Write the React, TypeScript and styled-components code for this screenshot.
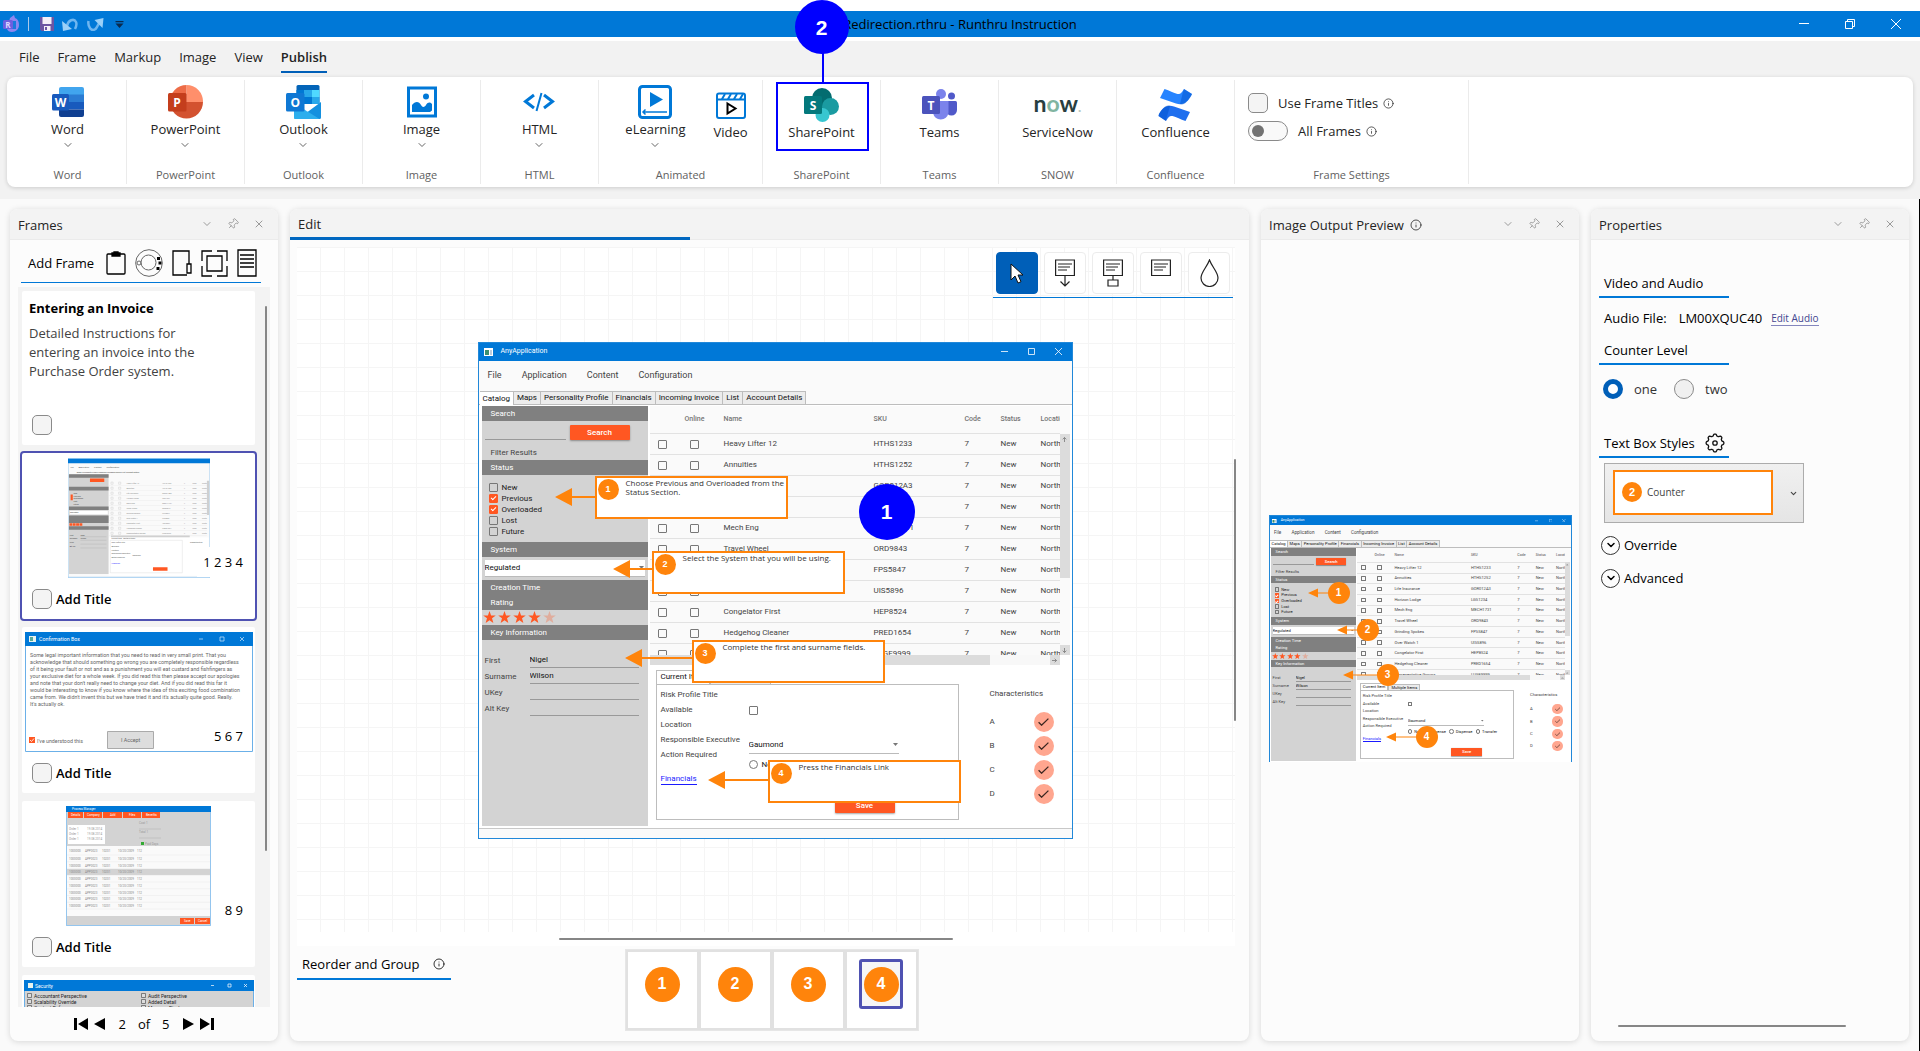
import React, { useId } from "react";
import styled, { createGlobalStyle, css } from "styled-components";
import { ChevronDown, Info, Pin, X } from "lucide-react";

const UI = `"Open Sans", "Noto Sans", sans-serif`;
const APP = `Roboto, "Liberation Sans", sans-serif`;
const BLUE = "#0078d7";
const INDIGO = "#4f52b2";
const ORANGE = "#ff840b";
const RED = "#ff5722";
const MARK = "#0000ff";

const GlobalStyle = createGlobalStyle`
  *, *::before, *::after { box-sizing: border-box; }
  body { margin: 0; background: #fff; font-family: ${UI}; font-size: 13px; line-height: 20px; color: #242424; }
  button, input, select { font: inherit; color: inherit; margin: 0; }
  button { padding: 0; border: 0; background: none; }
  svg { display: block; flex: none; }
`;

/* ---------- shell ---------- */

const Page = styled.div`
  height: 100vh;
  min-height: 720px;
  padding-top: 11px;
  display: flex;
  flex-direction: column;
  overflow: hidden;
`;

const TitleBar = styled.header`
  height: 26px;
  flex: none;
  display: grid;
  grid-template-columns: 1fr auto 1fr;
  align-items: center;
  background: ${BLUE};
`;

const QuickAccess = styled.div`
  display: flex;
  align-items: center;
  gap: 8px;
  padding-left: 3px;
`;

const QuickDivider = styled.span`
  width: 1px;
  height: 14px;
  margin-right: 3px;
  background: #a9c9ea;
`;

const DocTitle = styled.h1`
  margin: 0;
  font-size: 13px;
  font-weight: 400;
  line-height: 20px;
  color: #000;
`;

const WindowButtons = styled.div`
  justify-self: end;
  display: flex;
  padding-right: 1px;
`;

const WindowButton = styled.button`
  width: 46px;
  height: 26px;
  display: grid;
  place-items: center;
  color: #fff;
`;

const Body = styled.div`
  flex: 1;
  min-height: 0;
  margin-top: 4px;
  display: flex;
  flex-direction: column;
  background: #f2f2f2;
`;

const MenuTabs = styled.nav`
  display: flex;
  gap: 18px;
  padding: 6px 19px 0;
  height: 36px;
  flex: none;
`;

const MenuTab = styled.button<{ $active?: boolean }>`
  height: 26px;
  align-self: flex-start;
  padding-bottom: 4px;
  line-height: 20px;
  border-bottom: 2px solid ${(p) => (p.$active ? "#005fb8" : "transparent")};
  font-weight: ${(p) => (p.$active ? 600 : 400)};
`;

const Ribbon = styled.section`
  display: flex;
  height: 110px;
  flex: none;
  margin: 0 7px 12px;
  padding: 3px 2px;
  background: #fff;
  border-radius: 8px;
  box-shadow: 0 1px 4px rgba(0, 0, 0, 0.16);
`;

const Group = styled.div<{ $wide?: boolean; $settings?: boolean }>`
  width: ${(p) => (p.$settings ? 234 : p.$wide ? 164 : 118)}px;
  padding-top: 5px;
  display: flex;
  flex-direction: column;
  justify-content: space-between;
  border-right: 1px solid #ebebeb;
`;

const GroupItems = styled.div<{ $wide?: boolean }>`
  display: flex;
  justify-content: center;
  gap: 28px;
  padding-left: ${(p) => (p.$wide ? 12 : 0)}px;
`;

const GroupLabel = styled.div`
  font-size: 11px;
  line-height: 18px;
  text-align: center;
  color: #616161;
`;

const RibbonItem = styled.button<{ $plain?: boolean }>`
  position: relative;
  display: flex;
  flex-direction: column;
  align-items: center;
  padding-top: ${(p) => (p.$plain ? 3 : 0)}px;
`;

const RibbonIcon = styled.span`
  height: 34px;
  display: grid;
  place-items: center;
`;

const MarkBox = styled.span`
  position: absolute;
  left: 50%;
  top: -3px;
  width: 93px;
  height: 69px;
  margin-left: -46px;
  border: 2px solid ${MARK};
`;

const MarkStem = styled.span`
  position: absolute;
  left: 50%;
  top: -32px;
  width: 2px;
  height: 30px;
  background: ${MARK};
`;

const MarkDot = styled.span<{ $size: number; $x: string; $y: number }>`
  position: absolute;
  z-index: 5;
  left: ${(p) => p.$x};
  top: ${(p) => p.$y}px;
  width: ${(p) => p.$size}px;
  height: ${(p) => p.$size}px;
  border-radius: 50%;
  background: ${MARK};
  color: #fff;
  font: 700 21px/1 "Liberation Sans", Arial, sans-serif;
  display: grid;
  place-items: center;
`;

const Settings = styled.div`
  display: flex;
  flex-direction: column;
  gap: 8px;
  padding: 8px 13px 0;
`;

const SettingRow = styled.label`
  display: flex;
  align-items: center;
  gap: 10px;
  svg { margin-left: -5px; }
`;

const CheckBox = styled.input.attrs({ type: "checkbox" })`
  appearance: none;
  width: 20px;
  height: 20px;
  flex: none;
  border: 1px solid #8a8a8a;
  border-radius: 5px;
  background: #f4f4f4;
`;

const Toggle = styled.input.attrs({ type: "checkbox", role: "switch" })`
  appearance: none;
  width: 40px;
  height: 20px;
  flex: none;
  padding: 3px;
  border: 1px solid #8a8a8a;
  border-radius: 10px;
  background: #f9f9f9;
  &::before {
    content: "";
    display: block;
    width: 12px;
    height: 12px;
    border-radius: 50%;
    background: #727272;
  }
`;

const Workspace = styled.main`
  flex: 1;
  min-height: 0;
  display: grid;
  grid-template-columns: 268px minmax(0, 1fr) 318px 318px;
  grid-template-rows: minmax(0, 1fr);
  gap: 12px;
  padding: 10px;
  background: #fafafa;
  border-right: 1px solid #000;
`;

/* ---------- panels ---------- */

const PanelFrame = styled.section`
  display: flex;
  flex-direction: column;
  min-height: 0;
  background: #fcfcfc;
  border-radius: 8px;
  box-shadow: 0 1px 6px rgba(0, 0, 0, 0.14);
`;

const PanelHead = styled.header`
  display: flex;
  align-items: center;
  justify-content: space-between;
  height: 31px;
  flex: none;
  padding: 0 13px 0 8px;
  border-bottom: 1px solid #ebebeb;
  border-radius: 8px 8px 0 0;
  background: #f3f3f3;
`;

const PanelTitle = styled.h2`
  display: flex;
  align-items: center;
  gap: 6px;
  margin: 0;
  padding-top: 2px;
  font-size: 13px;
  font-weight: 400;
  line-height: 20px;
`;

const PanelTools = styled.div`
  display: flex;
  gap: 14px;
  color: #8f8f8f;
`;

function Panel({ title, info, children }: { title: string; info?: boolean; children: React.ReactNode }) {
  return (
    <PanelFrame>
      <PanelHead>
        <PanelTitle>
          {title}
          {info && <Info size={12} strokeWidth={1.6} />}
        </PanelTitle>
        <PanelTools>
          <button aria-label="Panel options"><ChevronDown size={12} strokeWidth={1.8} /></button>
          <button aria-label="Pin panel"><PinTilted size={12} strokeWidth={1.6} /></button>
          <button aria-label="Close panel"><X size={12} strokeWidth={1.8} /></button>
        </PanelTools>
      </PanelHead>
      {children}
    </PanelFrame>
  );
}

const PinTilted = styled(Pin)`
  transform: rotate(45deg);
`;

/* ---------- frames panel ---------- */

const AddFrame = styled.div`
  display: flex;
  align-items: center;
  gap: 9px;
  height: 43px;
  flex: none;
  margin: 0 17px 4px 11px;
  padding: 4px 3px 0 7px;
  border-bottom: 1px solid ${BLUE};
  color: #000;
`;

const AddFrameText = styled.span`
  margin-right: 3px;
`;

const FrameList = styled.div`
  flex: 1;
  min-height: 0;
  display: flex;
  margin: 0 8px;
  padding: 4px 3px 0 4px;
  gap: 10px;
  overflow: hidden;
  background: #f3f3f3;
`;

const FrameCards = styled.div`
  display: flex;
  flex-direction: column;
  flex: 1;
  min-width: 0;
  gap: 8px;
`;

const VerticalThumb = styled.span<{ $top: number; $height: number }>`
  flex: none;
  width: 2px;
  height: ${(p) => p.$height}px;
  margin-top: ${(p) => p.$top}px;
  border-radius: 1px;
  background: #868686;
`;

const Card = styled.article<{ $selected?: boolean; $text?: boolean }>`
  position: relative;
  display: flex;
  flex-direction: column;
  flex: none;
  justify-content: space-between;
  height: ${(p) => (p.$text ? 154 : 166)}px;
  padding: ${(p) => (p.$text ? "7px 7px 10px" : "5px 0 10px")};
  border-radius: 2px;
  background: #fff;
  ${(p) => p.$selected && css`box-shadow: 0 0 0 2px ${INDIGO};`}
`;

const CardPicture = styled.div`
  display: flex;
  justify-content: center;
`;

const CardCounters = styled.span`
  position: absolute;
  right: 6px;
  top: 94px;
  padding: 5px 6px;
  background: #fff;
  line-height: 20px;
  color: #000;
`;

const CardTitle = styled.h3`
  margin: 0 0 6px;
  font-size: 13px;
  line-height: 20px;
  font-weight: 700;
  color: #000;
`;

const CardText = styled.p`
  margin: 0;
  padding-right: 30px;
  line-height: 19px;
  color: #424242;
`;

const CardCheck = styled.label<{ $inset?: boolean }>`
  display: flex;
  align-items: center;
  gap: 4px;
  padding-left: ${(p) => (p.$inset ? 10 : 3)}px;
  font-weight: 600;
  color: #000;
`;

const Pager = styled.div`
  display: flex;
  align-items: center;
  justify-content: center;
  gap: 6px;
  height: 34px;
  flex: none;
  color: #000;
`;

const PagerText = styled.span`
  display: flex;
  gap: 12px;
  padding: 0 7px;
`;

/* ---------- edit panel ---------- */

const EditTab = styled.button`
  width: 400px;
  height: 31px;
  margin-left: -8px;
  padding: 2px 0 0 8px;
  text-align: left;
  border-bottom: 3px solid #0067c0;
  border-radius: 8px 0 0 0;
`;

const CanvasRow = styled.div`
  flex: 1;
  min-height: 0;
  display: flex;
  position: relative;
`;

const CanvasArea = styled.div`
  position: relative;
  flex: 1;
  min-width: 0;
  min-height: 0;
  display: grid;
  place-items: center;
  margin: 7px 14px 0 7px;
  padding: 0 0 13px 18px;
  overflow: hidden;
  background: #fff;
  &::before {
    content: "";
    position: absolute;
    inset: 0 0 14px;
    background-image: linear-gradient(#f5f5f5 1px, transparent 1px), linear-gradient(90deg, #f5f5f5 1px, transparent 1px);
    background-size: 24px 24px;
    background-position: 0 0, -1px 0;
  }
`;

const ScrollMark = styled.span<{ $vertical?: boolean }>`
  position: absolute;
  border-radius: 1px;
  background: #868686;
  ${(p) =>
    p.$vertical
      ? css`right: 13px; top: 31%; width: 2px; height: 262px;`
      : css`left: 28%; bottom: 6px; width: 394px; height: 2px;`}
`;

const ToolStrip = styled.div`
  position: absolute;
  z-index: 2;
  top: 5px;
  right: 2px;
  display: flex;
  gap: 6px;
  padding: 0 3px 3px;
  border-bottom: 1px solid ${BLUE};
`;

const ToolButton = styled.button<{ $active?: boolean }>`
  width: 42px;
  height: 42px;
  display: grid;
  place-items: center;
  border: 1px solid ${(p) => (p.$active ? "#005fb8" : "#ececec")};
  border-radius: 4px;
  background: ${(p) => (p.$active ? "#005fb8" : "#fff")};
`;

const Stage = styled.div`
  position: relative;
`;

const Reorder = styled.div`
  display: grid;
  grid-template-columns: 1fr auto 1fr;
  align-items: start;
  flex: none;
  padding: 3px 7px 10px;
`;

const ReorderTitle = styled.h3`
  justify-self: start;
  display: flex;
  align-items: center;
  gap: 14px;
  margin: 0;
  padding: 5px 6px 4px 5px;
  border-bottom: 2px solid ${BLUE};
  font-size: 13px;
  font-weight: 400;
  line-height: 20px;
  color: #000;
`;

const ReorderStrip = styled.div`
  display: flex;
  margin-left: 4px;
  border: 1px solid #e6e6e6;
`;

const ReorderCell = styled.div`
  width: 73px;
  height: 80px;
  display: flex;
  justify-content: center;
  align-items: flex-start;
  padding-top: 7px;
  border: 2px solid #e1e1e1;
  background: #fff;
`;

const ReorderFrame = styled.button<{ $selected?: boolean }>`
  width: 44px;
  height: 50px;
  display: grid;
  place-items: center;
  border: 3px solid ${(p) => (p.$selected ? INDIGO : "transparent")};
  border-radius: 3px;
  background: ${(p) => (p.$selected ? "#f6f6f6" : "transparent")};
`;

const Dot = styled.span<{ $size: number; $font: number }>`
  width: ${(p) => p.$size}px;
  height: ${(p) => p.$size}px;
  flex: none;
  display: grid;
  place-items: center;
  border-radius: 50%;
  background: ${ORANGE};
  color: #fff;
  font: 700 ${(p) => p.$font}px/1 "Liberation Sans", Arial, sans-serif;
`;

/* ---------- call-outs on the stage ---------- */

const CalloutBox = styled.div<{ $x: number; $y: number }>`
  position: absolute;
  left: ${(p) => p.$x}px;
  top: ${(p) => p.$y}px;
  width: 193px;
  height: 43px;
  display: flex;
  gap: 7px;
  padding-left: 1px;
  border: 2px solid ${ORANGE};
  background: #fff;
  font: 400 8px/9px "Open Sans", sans-serif;
  color: #333;
  white-space: pre;
`;

const CalloutDot = styled(Dot)`
  margin-top: 1px;
`;

const Arrow = styled.svg`
  position: absolute;
  left: 0;
  top: 0;
  width: 100%;
  height: 100%;
  overflow: visible;
  pointer-events: none;
`;

const PreviewDot = styled(Dot)<{ $x: number; $y: number }>`
  position: absolute;
  left: ${(p) => p.$x}px;
  top: ${(p) => p.$y}px;
`;

const callouts = [
  { x: 117, y: 134, tip: 77, ty: 155, text: "Choose Previous and Overloaded from the\nStatus Section." },
  { x: 174, y: 209, tip: 135, ty: 227, text: "Select the System that you will be using." },
  { x: 214, y: 298, tip: 147, ty: 316, text: "Complete the first and surname fields." },
  { x: 290, y: 418, tip: 230, ty: 438, text: "Press the Financials Link" },
];

const previewMarks = [
  { cx: 70, cy: 78, tip: 39 },
  { cx: 99, cy: 115, tip: 68 },
  { cx: 119, cy: 160, tip: 74 },
  { cx: 158, cy: 222, tip: 117 },
];

/* ---------- the captured application ---------- */

const Win = styled.div<{ $zoom?: number }>`
  zoom: ${(p) => p.$zoom ?? 1};
  width: 595px;
  height: 497px;
  display: flex;
  flex-direction: column;
  border: 1px solid #2188d9;
  background: #fafafa;
  font: 400 8px/15px ${APP};
  color: #444;
`;

const WinTitle = styled.div`
  height: 18px;
  flex: none;
  display: flex;
  align-items: center;
  justify-content: space-between;
  padding: 0 10px 0 5px;
  background: ${BLUE};
  color: #fff;
  font-size: 7px;
`;

const WinName = styled.span`
  display: flex;
  align-items: center;
  gap: 8px;
`;

const WinControls = styled.span`
  display: flex;
  gap: 20px;
`;

const WinMenu = styled.div`
  display: flex;
  gap: 20px;
  height: 30px;
  flex: none;
  padding: 7px 9px;
  font-size: 9px;
`;

const WinTabs = styled.div`
  display: flex;
  align-items: flex-end;
  height: 14px;
  flex: none;
  padding-left: 1px;
  border-bottom: 1px solid #bdbdbd;
`;

const WinTab = styled.button<{ $active?: boolean }>`
  height: ${(p) => (p.$active ? 14 : 13)}px;
  margin-bottom: ${(p) => (p.$active ? -1 : 0)}px;
  padding: 0 3px;
  line-height: 11px;
  border: solid #bdbdbd;
  border-width: 1px 1px 0 0;
  background: ${(p) => (p.$active ? "#fff" : "#ececec")};
  color: #111;
`;

const WinBody = styled.div`
  flex: 1;
  min-height: 0;
  display: flex;
  gap: 2px;
  padding: 1px 2px 2px 3px;
  border-bottom: 1px solid #c8c8c8;
  margin-bottom: 9px;
  background: #fff;
`;

const Side = styled.div`
  width: 166px;
  flex: none;
  background: #d3d3d3;
`;

const SideHead = styled.div`
  height: 15px;
  padding-left: 9px;
  background: #808080;
  color: #fff;
`;

const SearchRow = styled.div`
  display: flex;
  gap: 4px;
  padding: 4px 3px 0;
`;

const LineInput = styled.input<{ $w: number }>`
  width: ${(p) => p.$w}px;
  height: 15px;
  padding: 0;
  border: 0;
  border-bottom: 1px solid #999;
  border-radius: 0;
  background: none;
  color: #111;
`;

const RedButton = styled.button`
  width: 60px;
  height: 15px;
  border-radius: 1px;
  background: ${RED};
  color: #fff;
  font-weight: 500;
  line-height: 15px;
  box-shadow: 0 1px 2px rgba(0, 0, 0, 0.35);
`;

const FilterText = styled.div`
  height: 20px;
  padding: 5px 9px 0;
`;

const StatusList = styled.div`
  height: 67px;
  padding: 7px 7px 0;
  display: flex;
  flex-direction: column;
`;

const TickLabel = styled.label`
  display: flex;
  align-items: center;
  gap: 4px;
  height: 11px;
  line-height: 11px;
  color: #222;
`;

const Tick = styled.input`
  appearance: none;
  width: 9px;
  height: 9px;
  flex: none;
  border: 1px solid #777;
  border-radius: ${(p) => (p.type === "radio" ? "50%" : "1px")};
  &:checked {
    border-color: ${RED};
    background: ${RED};
  }
  &:checked::after {
    content: "";
    display: block;
    width: 3px;
    height: 5px;
    margin: 0 auto;
    border: solid #fff;
    border-width: 0 1px 1px 0;
    transform: rotate(45deg);
  }
`;

const SideSelect = styled.div`
  height: 23px;
  padding: 3px;
`;

const SelectWrap = styled.div<{ $w: number; $white?: boolean }>`
  display: flex;
  align-items: center;
  width: ${(p) => p.$w}px;
  height: 17px;
  padding-right: 1px;
  border-bottom: 1px solid #bbb;
  background: ${(p) => (p.$white ? "#fff" : "none")};
`;

const PlainSelect = styled.select`
  appearance: none;
  flex: 1;
  min-width: 0;
  padding: 0;
  border: 0;
  background: none;
  color: #111;
`;

const Stars = styled.div`
  display: flex;
  gap: 2px;
  height: 15px;
  padding: 1px;
`;

const KeyFields = styled.div`
  display: grid;
  gap: 1px;
  padding: 13px 9px 0 3px;
`;

const KeyField = styled.label`
  display: flex;
  justify-content: space-between;
  height: 15px;
`;

const Main = styled.div`
  flex: 1;
  min-width: 0;
`;

const TableFrame = styled.div`
  height: 249px;
  display: flex;
  background: #fafafa;
`;

const TableClip = styled.div`
  flex: 1;
  min-width: 0;
  overflow: hidden;
`;

const Table = styled.table`
  width: 430px;
  table-layout: fixed;
  border-collapse: collapse;
  th, td {
    height: 21px;
    padding: 0;
    border-bottom: 1px solid #e2e2e2;
    text-align: left;
    font-weight: 400;
    line-height: 12px;
    white-space: nowrap;
  }
  th {
    height: 28px;
    font-size: 7px;
    font-weight: 500;
    color: #757575;
  }
  td:nth-child(-n + 2), th:nth-child(-n + 2) { text-align: center; }
  td input { display: block; margin: 0 auto; }
`;

const HeadCell = styled.th<{ $w: number; $pad?: number }>`
  width: ${(p) => p.$w}px;
  && { padding-left: ${(p) => p.$pad ?? 0}px; }
`;

const NameCell = styled.td`
  && { padding-left: 10px; }
`;

const Track = styled.div`
  width: 10px;
  margin: 28px 0 0;
  display: flex;
  flex-direction: column;
  justify-content: space-between;
`;

const TrackThumb = styled.span<{ $h: number }>`
  min-width: 10px;
  height: ${(p) => p.$h}px;
  padding-top: 3px;
  background: #dcdcdc;
  display: flex;
  justify-content: center;
`;

const HTrack = styled.div`
  display: flex;
  justify-content: space-between;
  height: 10px;
  margin-right: 10px;
  background: #f8f8f8;
`;

const HThumb = styled.span<{ $w: number }>`
  width: ${(p) => p.$w}px;
  background: #dcdcdc;
`;

const Lower = styled.div`
  display: flex;
  gap: 31px;
  padding: 5px 6px 0;
`;

const Detail = styled.div`
  width: 303px;
`;

const DetailTabs = styled.div`
  display: flex;
  align-items: flex-end;
`;

const DetailTab = styled.button<{ $active?: boolean }>`
  height: ${(p) => (p.$active ? 14 : 12)}px;
  padding: 0 4px;
  line-height: 12px;
  border: 1px solid #bdbdbd;
  border-bottom: 0;
  background: ${(p) => (p.$active ? "#fff" : "#ececec")};
  color: #111;
`;

const DetailBody = styled.div`
  display: flex;
  gap: 10px;
  height: 136px;
  padding: 2px 4px;
  border: 1px solid #bdbdbd;
`;

const DetailLabels = styled.div`
  width: 78px;
  flex: none;
  display: flex;
  flex-direction: column;
  white-space: nowrap;
`;

const DetailLink = styled.a`
  align-self: flex-start;
  margin-top: 11px;
  line-height: 11px;
  color: #1a1aff;
  text-decoration: none;
  border-bottom: 1px solid #1a1aff;
`;

const DetailValues = styled.div`
  flex: 1;
  display: flex;
  flex-direction: column;
  align-items: flex-start;
  padding-top: 19px;
`;

const ExecutiveSlot = styled.div`
  margin-top: 22px;
`;

const RadioRow = styled.div`
  display: flex;
  gap: 6px;
  margin: 5px 0 28px;
`;

const SaveSlot = styled.div`
  padding-left: 86px;
`;

const Traits = styled.div`
  display: flex;
  flex-direction: column;
  padding-top: 16px;
`;

const TraitHead = styled.div`
  margin-bottom: 9px;
`;

const Trait = styled.div`
  display: flex;
  align-items: center;
  justify-content: space-between;
  width: 64px;
  height: 24px;
`;

const TraitTick = styled.span`
  width: 20px;
  height: 20px;
  display: grid;
  place-items: center;
  border-radius: 50%;
  background: #ffa68f;
`;

const rows: [string, string][] = [
  ["Heavy Lifter 12", "HTHS1233"],
  ["Annuities", "HTHS1252"],
  ["Life Insurance", "GOR012A3"],
  ["Horizon Lodge", "LGS1234"],
  ["Mech Eng", "MECH1731"],
  ["Travel Wheel", "ORD9843"],
  ["Grinding Spokes", "FPS5847"],
  ["Over Watch 1", "UIS5896"],
  ["Congelator First", "HEP8524"],
  ["Hedgehog Cleaner", "PRED1654"],
  ["Representative Groups", "LUGF9999"],
];

const appTabs = ["Catalog", "Maps", "Personality Profile", "Financials", "Incoming Invoice", "List", "Account Details"];
const statuses: [string, boolean][] = [["New", false], ["Previous", true], ["Overloaded", true], ["Lost", false], ["Future", false]];

const Caret = () => (
  <svg width="5" height="3" viewBox="0 0 5 3"><path d="M0 0h5L2.500 3z" fill="#777" /></svg>
);

const MiniArrow = ({ turn }: { turn: number }) => (
  <svg width="5" height="5" viewBox="0 0 5 5" fill="none" stroke="#777" strokeWidth=".8">
    <g transform={`rotate(${turn} 2.500 2.500)`}><path d="M2.500 5V.5M.7 2.300L2.500.5l1.800 1.800" /></g>
  </svg>
);

function AnyApplication({ zoom }: { zoom?: number }) {
  const id = useId();
  return (
    <Win $zoom={zoom}>
      <WinTitle>
        <WinName>
          <svg width="9" height="8" viewBox="0 0 9 8"><path fill="#fff" d="M0 0h9v8H0z" /><path fill="#3b8f6f" d="M1 2h4v5H1z" /><path fill="#bcd" d="M6 2h2v5H6z" /></svg>
          AnyApplication
        </WinName>
        <WinControls>
          <svg width="7" height="7" viewBox="0 0 7 7" stroke="#fff" strokeWidth=".8"><path d="M0 3.500h7" /></svg>
          <svg width="7" height="7" viewBox="0 0 7 7" stroke="#fff" strokeWidth=".8" fill="none"><path d="M.5.5h6v6h-6z" /></svg>
          <svg width="7" height="7" viewBox="0 0 7 7" stroke="#fff" strokeWidth=".8"><path d="M0 0l7 7M7 0L0 7" /></svg>
        </WinControls>
      </WinTitle>
      <WinMenu>
        <span>File</span><span>Application</span><span>Content</span><span>Configuration</span>
      </WinMenu>
      <WinTabs>
        {appTabs.map((t, i) => <WinTab key={t} $active={i === 0}>{t}</WinTab>)}
      </WinTabs>
      <WinBody>
        <Side>
          <SideHead>Search</SideHead>
          <SearchRow>
            <LineInput $w={81} aria-label="Search catalog" />
            <RedButton>Search</RedButton>
          </SearchRow>
          <FilterText>Filter Results</FilterText>
          <SideHead>Status</SideHead>
          <StatusList>
            {statuses.map(([name, on]) => (
              <TickLabel key={name}><Tick type="checkbox" defaultChecked={on} />{name}</TickLabel>
            ))}
          </StatusList>
          <SideHead>System</SideHead>
          <SideSelect>
            <SelectWrap $w={160} $white>
              <PlainSelect aria-label="System"><option>Regulated</option></PlainSelect><Caret />
            </SelectWrap>
          </SideSelect>
          <SideHead>Creation Time</SideHead>
          <SideHead>Rating</SideHead>
          <Stars>
            {[1, 1, 1, 1, 0.3].map((o, i) => (
              <svg key={i} width="13" height="12" viewBox="0 0 24 23"><path fill={RED} opacity={o} d="M12 0l3 8.500h9l-7.200 5.500 2.600 9L12 17.600 4.600 23l2.600-9L0 8.500h9z" /></svg>
            ))}
          </Stars>
          <SideHead>Key Information</SideHead>
          <KeyFields>
            {[["First", "Nigel"], ["Surname", "Wilson"], ["UKey", ""], ["Alt Key", ""]].map(([l, v]) => (
              <KeyField key={l}>{l}<LineInput $w={109} defaultValue={v} /></KeyField>
            ))}
          </KeyFields>
        </Side>
        <Main>
          <TableFrame>
            <TableClip>
              <Table>
                <thead>
                  <tr>
                    <HeadCell $w={26} aria-label="Select" />
                    <HeadCell $w={38}>Online</HeadCell>
                    <HeadCell $w={160} $pad={10}>Name</HeadCell>
                    <HeadCell $w={91}>SKU</HeadCell>
                    <HeadCell $w={36}>Code</HeadCell>
                    <HeadCell $w={40}>Status</HeadCell>
                    <HeadCell $w={39}>Location</HeadCell>
                  </tr>
                </thead>
                <tbody>
                  {rows.map(([name, sku]) => (
                    <tr key={sku}>
                      <td><Tick type="checkbox" aria-label={`Select ${name}`} /></td>
                      <td><Tick type="checkbox" aria-label={`${name} online`} /></td>
                      <NameCell>{name}</NameCell>
                      <td>{sku}</td><td>7</td><td>New</td><td>North</td>
                    </tr>
                  ))}
                </tbody>
              </Table>
            </TableClip>
            <Track>
              <TrackThumb $h={144}><MiniArrow turn={0} /></TrackThumb>
              <TrackThumb $h={10}><MiniArrow turn={180} /></TrackThumb>
            </Track>
          </TableFrame>
          <HTrack>
            <HThumb $w={340} />
            <TrackThumb $h={10}><MiniArrow turn={90} /></TrackThumb>
          </HTrack>
          <Lower>
            <Detail>
              <DetailTabs><DetailTab $active>Current Item</DetailTab><DetailTab>Multiple Items</DetailTab></DetailTabs>
              <DetailBody>
                <DetailLabels>
                  <span>Risk Profile Title</span>
                  <label htmlFor={`${id}a`}>Available</label>
                  <span>Location</span>
                  <label htmlFor={`${id}r`}>Responsible Executive</label>
                  <span>Action Required</span>
                  <DetailLink href="#financials">Financials</DetailLink>
                </DetailLabels>
                <DetailValues>
                  <Tick type="checkbox" id={`${id}a`} />
                  <ExecutiveSlot>
                    <SelectWrap $w={150}><PlainSelect id={`${id}r`}><option>Gaumond</option></PlainSelect><Caret /></SelectWrap>
                  </ExecutiveSlot>
                  <RadioRow>
                    {["New", "License", "Dispense", "Transfer"].map((n) => (
                      <TickLabel key={n}><Tick type="radio" name={`${id}act`} />{n}</TickLabel>
                    ))}
                  </RadioRow>
                  <SaveSlot><RedButton>Save</RedButton></SaveSlot>
                </DetailValues>
              </DetailBody>
            </Detail>
            <Traits>
              <TraitHead>Characteristics</TraitHead>
              {["A", "B", "C", "D"].map((t) => (
                <Trait key={t}>
                  {t}
                  <TraitTick><svg width="11" height="8" viewBox="0 0 11 8" fill="none" stroke="#3b2620" strokeWidth="1.300"><path d="M.6 4.200l3 3L10.400.6" /></svg></TraitTick>
                </Trait>
              ))}
            </Traits>
          </Lower>
        </Main>
      </WinBody>
    </Win>
  );
}

/* ---------- thumbnails ---------- */

const ThumbApplication = () => (
  <svg width="142" height="120" viewBox="0 0 595 497" fontFamily="Roboto, sans-serif" fontSize="8" fill="#888">
    <path fill="#fafafa" stroke="#7ab8ea" strokeWidth="3" d="M0 0h595v497H0z" />
    <path fill={BLUE} d="M0 0h595v19H0z" />
    <g fill="#555" fontSize="9"><text x="10" y="37">File</text><text x="44" y="37">Application</text><text x="109" y="37">Content</text><text x="161" y="37">Configuration</text></g>
    <text x="37" y="59" fontWeight="700" fill="#666">Maps  Personality Profile  Financials  Incoming Invoice  List  Account Details</text>
    <path fill="#fff" d="M170 330h420v160H170z" />
    <path fill="#d3d3d3" d="M4 65h166v418H4z" />
    <path fill="#808080" d="M4 65h166v15H4zM4 118h166v15H4zM4 200h166v15H4zM4 238h166v31H4zM4 283h166v15H4z" />
    <path fill="#fff" d="M7 218h160v16H7z" />
    <path fill={RED} d="M92 83h60v15H92zM11 150h9v24h-9zM356 455h61v15h-61zM6 271h12v10H6zM20 271h12v10H20zM34 271h12v10H34zM48 271h12v10H48z" />
    <g fill="#444"><text x="23" y="148">New</text><text x="23" y="160">Previous</text><text x="23" y="171">Overloaded</text><text x="23" y="182">Lost</text><text x="23" y="193">Future</text><text x="8" y="229">Regulated</text><text x="7" y="322">First</text><text x="52" y="322">Nigel</text><text x="7" y="337">Surname</text><text x="52" y="337">Wilson</text><text x="7" y="353">UKey</text><text x="7" y="368">Alt Key</text></g>
    <path stroke="#999" d="M52 327h109M52 342h109M52 358h109M52 374h109" />
    {rows.map(([name, sku], i) => (
      <g key={sku}>
        <path stroke="#ddd" d={`M172 ${112 + i * 21}h410`} />
        <path fill="none" stroke="#aaa" d={`M180 ${98 + i * 21}h9v9h-9zM212 ${98 + i * 21}h9v9h-9z`} />
        <text x="245" y={105 + i * 21}>{name}</text><text x="395" y={105 + i * 21}>{sku}</text><text x="486" y={105 + i * 21}>7</text><text x="522" y={105 + i * 21}>New</text><text x="562" y={105 + i * 21}>North</text>
      </g>
    ))}
    <path fill="#d0d0d0" d="M582 92h10v144h-10zM180 322h330v7H180z" />
    <path fill="none" stroke="#bbb" d="M177 342h302v136H177z" />
    <g fill="#555"><text x="182" y="338">Current Item</text><text x="231" y="338">Multiple Items</text><text x="182" y="355">Risk Profile Title</text><text x="182" y="370">Available</text><text x="182" y="386">Location</text><text x="182" y="401">Responsible Executive</text><text x="182" y="416">Action Required</text><text x="182" y="441" fill="#22f">Financials</text><text x="270" y="406">Gaumond</text><text x="511" y="354">Characteristics</text></g>
  </svg>
);

const legal = [
  "Some legal important information that you need to read in very small print. That you",
  "acknowledge that should something go wrong you are completely responsible regardless",
  "of it being your fault or not and as a punishment you will eat custard and fishfingers as",
  "your exclusive diet for a whole week. If you did read this then please accept our apologies",
  "and note that your don't really need to change your diet. And if you did read this far it",
  "would be interesting to know if you know where the idea of this exciting food combination",
  "came from. We didn't invent this but we have tried it and it's actually quite good. Really.",
  "It's actually ok.",
];

const ThumbConfirm = () => (
  <svg width="228" height="120" viewBox="0 0 228 120" fontFamily="Roboto, sans-serif" fontSize="5.300" fill="#666">
    <path fill="#fff" stroke="#6bb0e8" d="M.5.5h227v119H.5z" />
    <path fill={BLUE} d="M0 0h228v14H0z" />
    <path fill="#e8f3ee" d="M4 4h7v6H4z" /><path fill="#5a9" d="M5 5h3v4H5z" />
    <text x="14" y="9" fill="#fff">Confirmation Box</text>
    <path fill="none" stroke="#b9dcf7" strokeWidth=".8" d="M174 7h4M195 5h4v4h-4zM215 5l4 4M219 5l-4 4" />
    {legal.map((t, i) => <text key={t} x="5" y={25 + i * 7}>{t}</text>)}
    <path fill={RED} d="M4 105h6v6H4z" /><path fill="none" stroke="#fff" strokeWidth=".8" d="M5 108l1.500 1.500 2.500-3" />
    <text x="12" y="111">I've understood this</text>
    <path fill="#ddd" stroke="#aaa" d="M82.500 99.500h46v17h-46z" />
    <text x="96" y="110">I Accept</text>
  </svg>
);

const ThumbInvoice = () => (
  <svg width="145" height="120" viewBox="0 0 145 120" fontFamily="Roboto, sans-serif" fontSize="3" fill="#999">
    <path fill="#fafafa" stroke="#6bb0e8" strokeWidth=".8" d="M.4.4h144.200v119.200H.4z" />
    <path fill={BLUE} d="M0 0h145v6H0z" />
    <path fill="#d3d3d3" d="M1 6h143v34H1zM1 110h143v9H1zM1 63h143v6H1z" />
    <path fill={RED} d="M2 6h15v6H2zM18 6h18v6H18zM37 6h19v6H37zM57 6h18v6H57zM76 6h18v6H76zM114 112h14v6h-14zM129 112h15v6h-15z" />
    <g fill="#fff"><text x="6" y="4.400">Process Manager</text><text x="5" y="10.300">Details</text><text x="21" y="10.300">Company</text><text x="44" y="10.300">Add</text><text x="63" y="10.300">Files</text><text x="80" y="10.300">Benefits</text><text x="118" y="116">Save</text><text x="132" y="116">Cancel</text></g>
    <path fill="#fff" d="M2 19h37v19H2z" />
    {[24, 29, 34].map((y) => <g key={y}><text x="3" y={y}>Order 1</text><text x="21" y={y}>19.08.2014</text></g>)}
    <text x="73" y="18">Cost 1</text><text x="73" y="27">Total 1</text><text x="79" y="38.500">Paid Days</text>
    <path fill="#3a3" d="M75 36h3v3h-3z" /><path stroke="#aaa" strokeWidth=".4" d="M73 23h22M73 32h22" />
    {Array.from({ length: 9 }, (_, i) => (
      <g key={i} fill="#888">
        <text x="3" y={(i ? 47 : 45.500) + i * 6.750}>1000000</text><text x="19" y={(i ? 47 : 45.500) + i * 6.750}>APP0023</text><text x="36" y={(i ? 47 : 45.500) + i * 6.750}>10201</text><text x="52" y={(i ? 47 : 45.500) + i * 6.750}>10/20/2009</text><text x="71" y={(i ? 47 : 45.500) + i * 6.750}>112</text>
        <path stroke="#e5e5e5" strokeWidth=".4" d={`M1 ${49 + i * 6.75}h143`} />
      </g>
    ))}
  </svg>
);

const ThumbSecurity = () => (
  <svg width="230" height="120" viewBox="0 0 230 120" fontFamily="Roboto, sans-serif" fontSize="5" fill="#222">
    <path fill="#d3d3d3" stroke="#6bb0e8" d="M.5.5h229v119H.5z" />
    <path fill={BLUE} d="M0 0h230v11H0z" />
    <path fill="#e8f3ee" d="M4 3h5v5H4z" /><text x="11" y="8" fill="#fff">Security</text>
    <path fill="none" stroke="#fff" strokeWidth=".7" d="M187 5.500h3M204 4h3v3h-3zM220 4l3 3M223 4l-3 3" />
    <path fill="#ddd" stroke="#555" strokeWidth=".7" d="M3.500 13.500h4v4h-4zM3.500 19.500h4v4h-4zM3.500 25.500h4v4h-4zM117.500 13.500h4v4h-4zM117.500 19.500h4v4h-4zM117.500 25.500h4v4h-4z" />
    <text x="10" y="17.500">Accountant Perspective</text><text x="10" y="23.500">Scalability Override</text><text x="10" y="29.500">Contact Reference</text>
    <text x="124" y="17.500">Audit Perspective</text><text x="124" y="23.500">Added Detail</text><text x="124" y="29.500">Manager Rival</text>
  </svg>
);

/* ---------- ribbon icons ---------- */

const Letter = ({ x, y, children }: { x: number; y: number; children: string }) => (
  <text x={x} y={y} textAnchor="middle" fontFamily="Open Sans, sans-serif" fontWeight="700" fontSize="12" fill="#fff">{children}</text>
);

const WordIcon = () => (
  <svg width="32" height="32" viewBox="0 0 32 32">
    <path fill="#41a5ee" d="M9 1h21a2 2 0 0 1 2 2v6H7V3a2 2 0 0 1 2-2z" /><path fill="#2b7cd3" d="M7 8.500h25V16H7z" />
    <path fill="#185abd" d="M7 16h25v7.500H7z" /><path fill="#103f91" d="M7 23.500h25V29a2 2 0 0 1-2 2H9a2 2 0 0 1-2-2z" />
    <rect y="8" width="17" height="16.500" rx="1.500" fill="#185abd" /><Letter x={8.5} y={20.5}>W</Letter>
  </svg>
);
const PowerPointIcon = () => (
  <svg width="35" height="34" viewBox="0 0 35 34">
    <path fill="#ff8f6b" d="M18.500 0A16.500 16.500 0 0 1 35 17H18.500z" /><path fill="#ed6c47" d="M18.500 0v17H2A16.500 16.500 0 0 1 18.500 0z" /><path fill="#d35230" d="M2 17h33a16.500 16.500 0 0 1-33 0z" />
    <rect y="8" width="18.500" height="18.500" rx="1.500" fill="#c43e1c" /><Letter x={9} y={21.5}>P</Letter>
  </svg>
);
const OutlookIcon = () => (
  <svg width="35" height="34" viewBox="0 0 35 34">
    <path fill="#0364b8" d="M12 0h20a1.500 1.500 0 0 1 1.500 1.500V18h-23V1.500A1.500 1.500 0 0 1 12 0z" /><path fill="#0078d4" d="M10.500 5h7.500v7h-7.500z" /><path fill="#28a8ea" d="M18 5h8v7h-8z" /><path fill="#50d9ff" d="M26 5h7.500v7H26z" /><path fill="#0078d4" d="M18 12h8v7h-8z" /><path fill="#28a8ea" d="M26 12h7.500v7H26z" />
    <path fill="#1490df" d="M35 17v15.500a1.500 1.500 0 0 1-1.500 1.500H9.500A1.500 1.500 0 0 1 8 32.500V18l13.500 9z" /><path fill="#35b8f1" d="M8 18l25.500 16h-24A1.500 1.500 0 0 1 8 32.500z" opacity=".75" />
    <rect y="8" width="18.500" height="18.500" rx="1.500" fill="#0f78d4" /><Letter x={9.2} y={21.5}>O</Letter>
  </svg>
);
const ImageIcon = () => (
  <svg width="30" height="32" viewBox="0 0 30 32">
    <rect x="1.500" y="2" width="27" height="28" fill="#fff" stroke={BLUE} strokeWidth="3" />
    <circle cx="19" cy="10.500" r="3" fill={BLUE} /><path fill={BLUE} d="M5 26v-7c3-4 7-4 9 0 1.500 3 4 2 5 0 2-3 4-3 6-1v6.500L23 26z" />
  </svg>
);
const HtmlIcon = () => (
  <svg width="32" height="20" viewBox="0 0 32 20" fill="none" stroke={BLUE} strokeWidth="3">
    <path d="M11 3L2.500 9.500 11 16M21 3l8.500 6.500L21 16" /><path d="M18.500 1l-5 18" strokeWidth="2" />
  </svg>
);
const LearningIcon = () => (
  <svg width="34" height="34" viewBox="0 0 34 34" fill="none" stroke={BLUE}>
    <rect x="1.500" y="1.500" width="31" height="31" rx="3" strokeWidth="3" /><path fill={BLUE} stroke="none" d="M12 7l13 7.500L12 22z" /><path strokeWidth="1.500" d="M5 27h24M7.500 24.500L5 27l2.500 2.500" />
  </svg>
);
const VideoIcon = () => (
  <svg width="30" height="27" viewBox="0 0 30 27" fill="none" stroke={BLUE} strokeWidth="2">
    <rect x="1" y="1.500" width="28" height="24.500" rx="2" /><path d="M1 7.500h28M6 7l3-5M12 7l3-5M18 7l3-5M24 7l3-5" /><path stroke="#000" d="M11.500 11.500l8 5-8 5z" />
  </svg>
);
const SharePointIcon = () => (
  <svg width="35" height="34" viewBox="0 0 35 34">
    <circle cx="18" cy="10" r="10" fill="#036c70" /><circle cx="26.500" cy="18.500" r="8.500" fill="#1a9ba1" /><circle cx="18.500" cy="27" r="7" fill="#37c6d0" />
    <rect y="8" width="18" height="18" rx="1.500" fill="#03787c" /><Letter x={9} y={21.500}>S</Letter>
  </svg>
);
const TeamsIcon = () => (
  <svg width="35" height="33" viewBox="0 0 35 33">
    <circle cx="29.500" cy="7" r="3.500" fill="#5059c9" /><path fill="#5059c9" d="M24 12h9.500A1.500 1.500 0 0 1 35 13.500V21a5.500 5.500 0 0 1-11 0z" />
    <circle cx="19" cy="5" r="5" fill="#7b83eb" /><path fill="#7b83eb" d="M11 12h15.500v12a8 8.500 0 0 1-15.500 0z" />
    <rect y="7" width="18" height="18" rx="1.500" fill="#4b53bc" /><Letter x={9} y={20.500}>T</Letter>
  </svg>
);
const NowWord = styled.span`
  font: 700 23px/20px Lato, sans-serif;
  color: #293e40;
  em { font-style: normal; color: #81b5a1; }
  small { font-size: 14px; color: #b6c9c2; }
`;
const NowIcon = () => <NowWord>n<em>o</em>w<small>.</small></NowWord>;
const ConfluenceIcon = () => (
  <svg width="34" height="34" viewBox="0 0 34 34">
    <path fill="#1f6fee" d="M1 26c3-5 7-10 15-7.500L32 24l-4.500 9c-5-1.500-9-4-13-5-3-.6-4 1-6.500 5L.5 28z" />
    <path fill="#2684ff" d="M33 8c-3 5-7 10-15 7.500L2 10l4.500-9c5 1.500 9 4 13 5 3 .6 4-1 6.500-5l8 5z" />
    <path fill="#0052cc" opacity=".5" d="M1 26c3-5 7-10 11-8l-3.500 12L8 33 .5 28zM33 8c-3 5-7 10-11 8L25 4l1-3 8 5z" />
  </svg>
);

const ribbon: { label: string; items: { name: string; icon: React.ReactNode; plain?: boolean; marked?: boolean }[] }[] = [
  { label: "Word", items: [{ name: "Word", icon: <WordIcon /> }] },
  { label: "PowerPoint", items: [{ name: "PowerPoint", icon: <PowerPointIcon /> }] },
  { label: "Outlook", items: [{ name: "Outlook", icon: <OutlookIcon /> }] },
  { label: "Image", items: [{ name: "Image", icon: <ImageIcon /> }] },
  { label: "HTML", items: [{ name: "HTML", icon: <HtmlIcon /> }] },
  { label: "Animated", items: [{ name: "eLearning", icon: <LearningIcon /> }, { name: "Video", icon: <VideoIcon />, plain: true }] },
  { label: "SharePoint", items: [{ name: "SharePoint", icon: <SharePointIcon />, plain: true, marked: true }] },
  { label: "Teams", items: [{ name: "Teams", icon: <TeamsIcon />, plain: true }] },
  { label: "SNOW", items: [{ name: "ServiceNow", icon: <NowIcon />, plain: true }] },
  { label: "Confluence", items: [{ name: "Confluence", icon: <ConfluenceIcon />, plain: true }] },
];

/* ---------- properties ---------- */

const PropsBody = styled.div`
  flex: 1;
  display: flex;
  flex-direction: column;
  align-items: flex-start;
  padding: 31px 8px 14px;
  color: #000;
`;

const PropHead = styled.h3`
  display: flex;
  align-items: center;
  gap: 10px;
  width: 130px;
  height: 27px;
  margin: 0;
  padding: 0 5px 2px;
  border-bottom: 2px solid ${BLUE};
  font-size: 13px;
  font-weight: 400;
  line-height: 20px;
  white-space: nowrap;
`;

const StylesHead = styled(PropHead)`
  margin-top: 18px;
`;

const PropRow = styled.div<{ $h: number }>`
  display: flex;
  align-items: center;
  gap: 12px;
  height: ${(p) => p.$h}px;
  padding-left: 5px;
`;

const LevelRow = styled(PropRow)`
  gap: 10px;
  padding-left: 4px;
`;

const AudioLink = styled.a`
  margin-left: -3px;
  font-size: 10px;
  line-height: 14px;
  color: #444791;
  text-decoration: none;
  border-bottom: 1px solid #8486bd;
`;

const RadioLabel = styled.label`
  display: flex;
  align-items: center;
  gap: 11px;
  width: 61px;
  color: #333;
`;

const Radio = styled.input.attrs({ type: "radio" })`
  appearance: none;
  width: 20px;
  height: 20px;
  flex: none;
  border: 1px solid #8a8a8a;
  border-radius: 50%;
  background: #f0f0f0;
  &:checked {
    border: 5px solid #005fb8;
    background: #fff;
  }
`;

const StylePicker = styled.div`
  display: flex;
  align-items: center;
  justify-content: space-between;
  width: 200px;
  height: 60px;
  margin: 5px 0 0 5px;
  padding: 0 5px 0 8px;
  border: 1px solid #acacac;
  background: linear-gradient(#f0f0f0, #e5e5e5);
`;

const StyleSample = styled.label`
  display: flex;
  align-items: center;
  gap: 5px;
  width: 160px;
  height: 45px;
  margin-bottom: 2px;
  padding-left: 7px;
  border: 2px solid ${ORANGE};
  background: #fff;
`;

const StyleSelect = styled.select`
  appearance: none;
  flex: 1;
  padding: 0;
  border: 0;
  background: none;
  font-size: 10px;
  color: #444;
`;

const Expander = styled.button`
  display: flex;
  align-items: center;
  gap: 4px;
  height: 20px;
  margin: 12px 0 1px 2px;
`;

const Ring = styled.span`
  width: 19px;
  height: 19px;
  display: grid;
  place-items: center;
  border: 1px solid #333;
  border-radius: 50%;
`;

const PropsScroll = styled.span`
  width: 228px;
  height: 2px;
  margin: auto 0 0 19px;
  border-radius: 1px;
  background: #868686;
`;

const PreviewBody = styled.div`
  flex: 1;
  display: grid;
  place-items: center;
  padding-bottom: 4px;
`;

const PreviewStage = styled.div`
  position: relative;
  width: 303px;
  height: 247px;
`;

const PreviewClip = styled.div`
  height: 247px;
  overflow: hidden;
`;

const gearOutline = Array.from({ length: 96 }, (_, i) => {
  const a = (i / 96) * Math.PI * 2;
  const r = 8 + 0.9 * Math.tanh(2 * Math.cos(a * 8));
  return `${(10 + r * Math.cos(a)).toFixed(2)},${(10 + r * Math.sin(a)).toFixed(2)}`;
}).join(" ");

const Gear = () => (
  <svg width="20" height="20" viewBox="0 0 20 20" fill="none" stroke="#111" strokeWidth="1.300" strokeLinejoin="round">
    <polygon points={gearOutline} />
    <circle cx="10" cy="10" r="2.200" />
  </svg>
);

const SmallInfo = () => <Info size={11} strokeWidth={1.600} />;

const ToolDoc = ({ children }: { children?: React.ReactNode }) => (
  <svg width="20" height="28" viewBox="0 0 20 28" fill="none" stroke="#222" strokeWidth="1.200">
    <path d="M.6 1h18.800v15.500H.6z" /><path d="M3 5h14M3 8h12M3 11h9" />{children}
  </svg>
);

export default function App() {
  return (
    <Page>
      <GlobalStyle />
      <TitleBar>
        <QuickAccess>
          <svg width="17" height="18" viewBox="0 0 17 18"><path fill="#8d86f0" d="M7 3l4-3 1 3c3 1 4 4 4 7 0 4-3 7-7 7-3 0-4-1-5-3z" /><path fill="#1a79dd" d="M8 6h5v8H8z" /><rect y="5" width="10" height="9" rx="1.500" fill="#6d5fe0" /><text x="5" y="12.500" textAnchor="middle" fontSize="8" fontWeight="700" fill="#dcd8ff" fontFamily="Open Sans">R</text></svg>
          <QuickDivider />
          <button aria-label="Save"><svg width="14" height="14" viewBox="0 0 14 14"><path fill="#6c55a3" d="M0 0h14v14H1.500L0 12.500z" /><path fill="#f4eff8" d="M2.500 0h9v7h-9zM4 9h6.500v5H4z" /><path fill="#6c55a3" d="M5 10h2v3H5z" /></svg></button>
          <button aria-label="Undo"><svg width="17" height="13" viewBox="0 0 17 13"><path fill="none" stroke="#6fb6f0" strokeWidth="2.500" d="M5 8c1-6 7-8 9-4 1 2 0 5-1 7" /><path fill="#9bd0f8" d="M0 3l1 10 9-2z" /></svg></button>
          <button aria-label="Redo"><svg width="17" height="13" viewBox="0 0 17 13"><path fill="none" stroke="#6fb6f0" strokeWidth="2.500" d="M1.500 3c-1 6 3 11 7 8 2-2 2-4 4-6" /><path fill="#9bd0f8" d="M16.500 0l-9 2 8 8z" /></svg></button>
          <button aria-label="Customize"><svg width="15" height="7" viewBox="0 0 15 7"><path fill="#0a2a4d" d="M3.500 0h8v1.200h-8zM3.500 2.500h8l-4 4.500z" /></svg></button>
        </QuickAccess>
        <DocTitle>Redirection.rthru - Runthru Instruction</DocTitle>
        <WindowButtons>
          <WindowButton aria-label="Minimize"><svg width="10" height="10" viewBox="0 0 10 10" stroke="currentColor"><path d="M0 4.500h10" /></svg></WindowButton>
          <WindowButton aria-label="Restore"><svg width="10" height="10" viewBox="0 0 10 10" stroke="currentColor" fill="none"><path d="M.5 2.500h7v7h-7zM2.500 2.500v-2h7v7h-2" /></svg></WindowButton>
          <WindowButton aria-label="Close"><svg width="10" height="10" viewBox="0 0 10 10" stroke="currentColor"><path d="M0 0l10 10M10 0L0 10" /></svg></WindowButton>
        </WindowButtons>
      </TitleBar>
      <Body>
        <MenuTabs>
          {["File", "Frame", "Markup", "Image", "View", "Publish"].map((m) => <MenuTab key={m} $active={m === "Publish"}>{m}</MenuTab>)}
        </MenuTabs>
        <Ribbon>
          {ribbon.map((g) => (
            <Group key={g.label} $wide={g.items.length > 1}>
              <GroupItems $wide={g.items.length > 1}>
                {g.items.map((it) => (
                  <RibbonItem key={it.name} $plain={it.plain}>
                    <RibbonIcon>{it.icon}</RibbonIcon>
                    {it.name}
                    {!it.plain && <ChevronDown size={12} color="#666" />}
                    {it.marked && <><MarkBox /><MarkStem /><MarkDot $size={54} $x="calc(50% - 27px)" $y={-85}>2</MarkDot></>}
                  </RibbonItem>
                ))}
              </GroupItems>
              <GroupLabel>{g.label}</GroupLabel>
            </Group>
          ))}
          <Group $settings>
            <Settings>
              <SettingRow><CheckBox />Use Frame Titles <SmallInfo /></SettingRow>
              <SettingRow><Toggle />All Frames <SmallInfo /></SettingRow>
            </Settings>
            <GroupLabel>Frame Settings</GroupLabel>
          </Group>
        </Ribbon>
        <Workspace>
          <Panel title="Frames">
            <AddFrame>
              <AddFrameText>Add Frame</AddFrameText>
              <button aria-label="Paste"><svg width="20" height="24" viewBox="0 0 20 24" fill="none" stroke="#000" strokeWidth="1.300"><rect x="1" y="3" width="18" height="20" rx="1" /><path fill="#000" d="M6 2h2V1h4v1h2v3H6z" /></svg></button>
              <button aria-label="Record"><svg width="28" height="28" viewBox="0 0 28 28" fill="none" stroke="#666"><circle cx="14" cy="14" r="13.300" /><circle cx="13.500" cy="13.500" r="7.500" /><circle cx="4" cy="14" r="2" /><path fill="#000" stroke="none" d="M22 8h3v3h-3zM23.500 12.500h3v3h-3zM21.500 18h3v3h-3z" /></svg></button>
              <button aria-label="Device"><svg width="20" height="26" viewBox="0 0 20 26" fill="none" stroke="#000" strokeWidth="1.300"><path d="M17 14V1H1v24h14" /><path d="M15 14h4v9h-4z" /></svg></button>
              <button aria-label="Capture region"><svg width="27" height="27" viewBox="0 0 27 27" fill="none" stroke="#000" strokeWidth="1.300"><path d="M11 1H1v10M16 1h10v10M1 16v10h10M26 16v10H16M6 6h15v15H6z" /></svg></button>
              <button aria-label="Text frame"><svg width="20" height="28" viewBox="0 0 20 28" fill="none" stroke="#000" strokeWidth="1.300"><path d="M1 1h18v26H1zM3 6h14M3 10h14M3 14h14M3 18h14" /></svg></button>
            </AddFrame>
            <FrameList>
              <FrameCards>
                <Card $text>
                  <div>
                    <CardTitle>Entering an Invoice</CardTitle>
                    <CardText>Detailed Instructions for entering an invoice into the Purchase Order system.</CardText>
                  </div>
                  <CardCheck aria-label="Select frame"><CheckBox /></CardCheck>
                </Card>
                {([["1 2 3 4", ThumbApplication], ["5 6 7", ThumbConfirm], ["8 9", ThumbInvoice], ["", ThumbSecurity]] as const).map(([n, Picture], i) => (
                  <Card key={i} $selected={i === 0}>
                    <CardPicture><Picture /></CardPicture>
                    {n && <CardCounters>{n}</CardCounters>}
                    <CardCheck $inset><CheckBox />Add Title</CardCheck>
                  </Card>
                ))}
              </FrameCards>
              <VerticalThumb $top={15} $height={545} />
            </FrameList>
            <Pager>
              <button aria-label="First"><svg width="14" height="12" viewBox="0 0 14 12"><path d="M0 0h3v12H0zM14 0v12L4 6z" /></svg></button>
              <button aria-label="Previous"><svg width="11" height="12" viewBox="0 0 11 12"><path d="M11 0v12L0 6z" /></svg></button>
              <PagerText><span>2</span><span>of</span><span>5</span></PagerText>
              <button aria-label="Next"><svg width="11" height="12" viewBox="0 0 11 12"><path d="M0 0v12l11-6z" /></svg></button>
              <button aria-label="Last"><svg width="14" height="12" viewBox="0 0 14 12"><path d="M11 0h3v12h-3zM0 0v12l10-6z" /></svg></button>
            </Pager>
          </Panel>

          <PanelFrame>
            <PanelHead><EditTab>Edit</EditTab></PanelHead>
            <CanvasRow>
              <CanvasArea>
                <Stage>
                  <AnyApplication />
                  <Arrow fill={ORANGE} stroke="none">
                    {callouts.map((c) => <path key={c.x} d={`M${c.tip} ${c.ty}l17-9v8H${c.x}v2H${c.tip + 17}v8z`} />)}
                  </Arrow>
                  {callouts.map((c, i) => (
                    <CalloutBox key={c.x} $x={c.x} $y={c.y}><CalloutDot $size={21} $font={9}>{i + 1}</CalloutDot>{c.text}</CalloutBox>
                  ))}
                  <MarkDot $size={56} $x="381px" $y={142}>1</MarkDot>
                </Stage>
                <ToolStrip>
                  <ToolButton $active aria-label="Select"><svg width="14" height="21" viewBox="0 0 14 21"><path fill="#fff" stroke="#111" d="M1 1v16l4-4 3 7 3-1.300-3-6.700h5z" /></svg></ToolButton>
                  <ToolButton aria-label="Text with arrow"><ToolDoc><path d="M10 17v10M5.500 22.500L10 27l4.500-4.500" /></ToolDoc></ToolButton>
                  <ToolButton aria-label="Text with box"><ToolDoc><path d="M10 17v4M5 21h10v6H5z" /></ToolDoc></ToolButton>
                  <ToolButton aria-label="Text"><ToolDoc /></ToolButton>
                  <ToolButton aria-label="Blur"><svg width="19" height="28" viewBox="0 0 19 28" fill="none" stroke="#222" strokeWidth="1.200"><path d="M9.500 1C7 8 1 13 1 19a8.500 8.500 0 0 0 17 0c0-6-6-11-8.500-18z" /></svg></ToolButton>
                </ToolStrip>
              </CanvasArea>
              <ScrollMark $vertical />
              <ScrollMark />
            </CanvasRow>
            <Reorder>
              <ReorderTitle>Reorder and Group <Info size={12} strokeWidth={1.600} /></ReorderTitle>
              <ReorderStrip>
                {[1, 2, 3, 4].map((n) => (
                  <ReorderCell key={n}><ReorderFrame $selected={n === 4}><Dot $size={35} $font={16}>{n}</Dot></ReorderFrame></ReorderCell>
                ))}
              </ReorderStrip>
            </Reorder>
          </PanelFrame>

          <Panel title="Image Output Preview" info>
            <PreviewBody>
              <PreviewStage>
                <PreviewClip inert><AnyApplication zoom={0.51} /></PreviewClip>
                <Arrow fill={ORANGE}>
                  {previewMarks.map((m) => <path key={m.cx} d={`M${m.tip} ${m.cy}l10-4.500v4H${m.cx}v1H${m.tip + 10}v4z`} />)}
                </Arrow>
                {previewMarks.map((m, i) => <PreviewDot key={m.cx} $size={22} $font={10} $x={m.cx - 11} $y={m.cy - 11}>{i + 1}</PreviewDot>)}
              </PreviewStage>
            </PreviewBody>
          </Panel>

          <Panel title="Properties">
            <PropsBody>
              <PropHead>Video and Audio</PropHead>
              <PropRow $h={40}><span>Audio File:</span><span>LM00XQUC40</span><AudioLink href="#audio">Edit Audio</AudioLink></PropRow>
              <PropHead>Counter Level</PropHead>
              <LevelRow $h={48}>
                <RadioLabel><Radio name="level" defaultChecked />one</RadioLabel>
                <RadioLabel><Radio name="level" />two</RadioLabel>
              </LevelRow>
              <StylesHead>Text Box Styles <button aria-label="Style settings"><Gear /></button></StylesHead>
              <StylePicker>
                <StyleSample><Dot $size={20} $font={11}>2</Dot><StyleSelect aria-label="Text box style"><option>Counter</option></StyleSelect></StyleSample>
                <ChevronDown size={9} strokeWidth={3} color="#444" />
              </StylePicker>
              <Expander><Ring><ChevronDown size={12} strokeWidth={3} /></Ring>Override</Expander>
              <Expander><Ring><ChevronDown size={12} strokeWidth={3} /></Ring>Advanced</Expander>
              <PropsScroll />
            </PropsBody>
          </Panel>
        </Workspace>
      </Body>
    </Page>
  );
}
